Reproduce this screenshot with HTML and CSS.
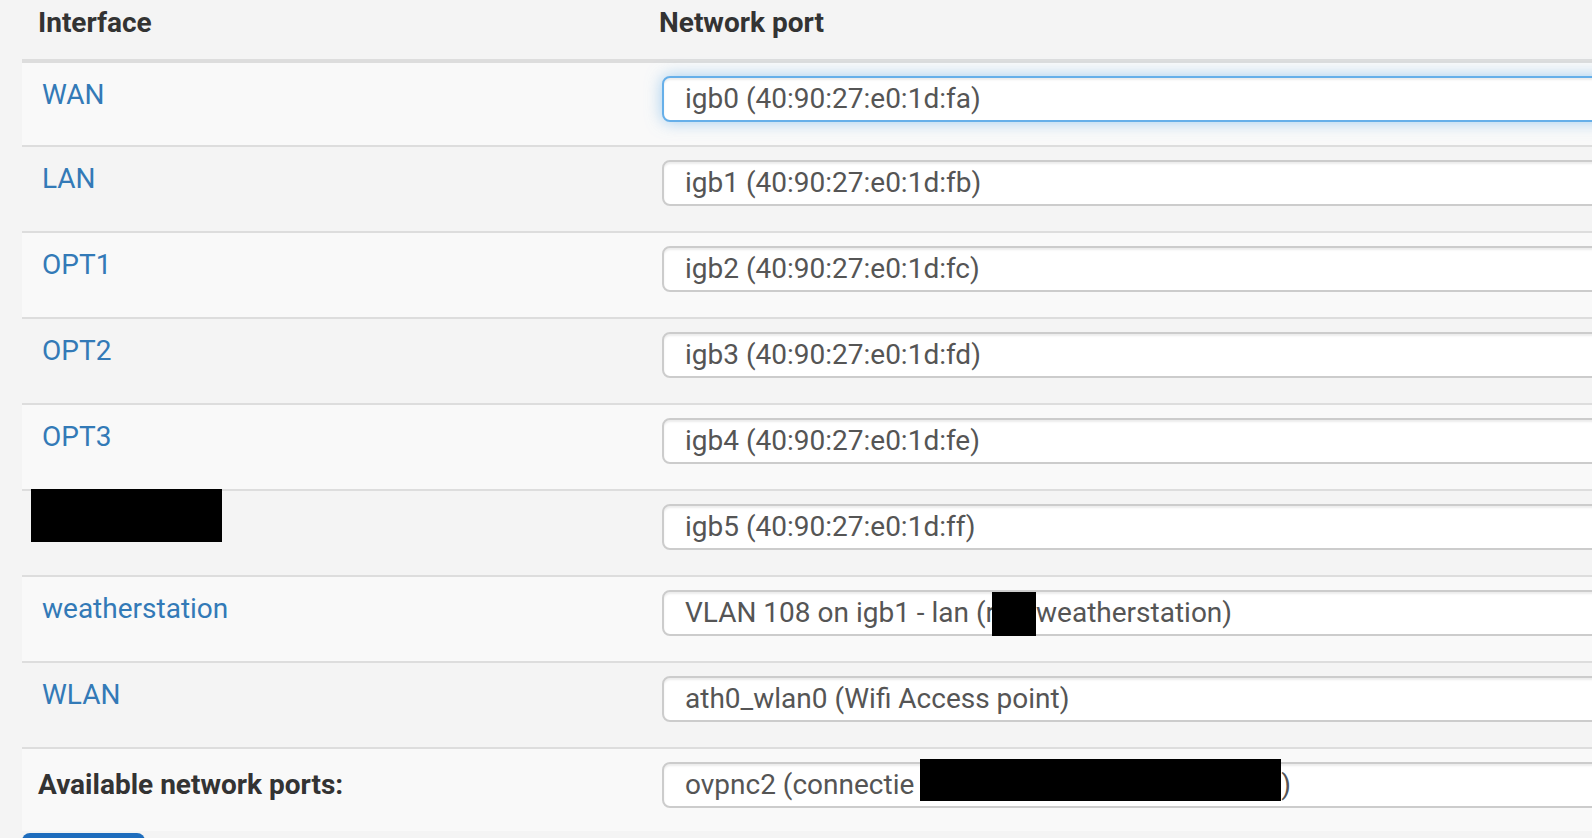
FILE: index.html
```html
<!DOCTYPE html>
<html lang="en">
<head>
    <meta charset="UTF-8">
    <title>Interfaces: Interface Assignments</title>
    <link rel="stylesheet" href="styles.css">
</head>
<body>
    <div class="content">
        <table class="assign-table">
            <thead>
                <tr>
                    <th class="col-if">Interface</th>
                    <th class="col-port">Network port</th>
                </tr>
            </thead>
            <tbody>
                <tr>
                    <td class="if-name"><a href="#">WAN</a></td>
                    <td><div class="port-select focused">igb0 (40:90:27:e0:1d:fa)</div></td>
                </tr>
                <tr>
                    <td class="if-name"><a href="#">LAN</a></td>
                    <td><div class="port-select">igb1 (40:90:27:e0:1d:fb)</div></td>
                </tr>
                <tr>
                    <td class="if-name"><a href="#">OPT1</a></td>
                    <td><div class="port-select">igb2 (40:90:27:e0:1d:fc)</div></td>
                </tr>
                <tr>
                    <td class="if-name"><a href="#">OPT2</a></td>
                    <td><div class="port-select">igb3 (40:90:27:e0:1d:fd)</div></td>
                </tr>
                <tr>
                    <td class="if-name"><a href="#">OPT3</a></td>
                    <td><div class="port-select">igb4 (40:90:27:e0:1d:fe)</div></td>
                </tr>
                <tr>
                    <td class="if-name"><div class="redact redact-name"></div></td>
                    <td><div class="port-select">igb5 (40:90:27:e0:1d:ff)</div></td>
                </tr>
                <tr>
                    <td class="if-name"><a href="#">weatherstation</a></td>
                    <td><div class="port-select">VLAN 108 on igb1 - lan (r<span class="redact redact-vlan"></span>weatherstation)</div></td>
                </tr>
                <tr>
                    <td class="if-name"><a href="#">WLAN</a></td>
                    <td><div class="port-select">ath0_wlan0 (Wifi Access point)</div></td>
                </tr>
                <tr class="avail-row">
                    <th>Available network ports:</th>
                    <td><div class="port-select">ovpnc2 (connectie <span class="redact redact-vpn"></span>)</div></td>
                </tr>
            </tbody>
        </table>
        <button class="save-button" aria-label="Save"></button>
    </div>
</body>
</html>
```

FILE: styles.css
```css
html, body {
    margin: 0;
    padding: 0;
    overflow: hidden;
}
body {
    font-family: Roboto, "Liberation Sans", Arial, sans-serif;
    font-size: 28px;
    line-height: 40px;
    background-color: #f4f4f4;
    color: #333;
}
.content {
    padding-left: 22px;
    width: 1800px;
}
.assign-table {
    border-collapse: separate;
    border-spacing: 0;
    table-layout: fixed;
    width: 1700px;
}
.assign-table th {
    text-align: left;
    font-weight: bold;
    padding: 3px 16px 16px;
    vertical-align: top;
}
.assign-table thead th {
    border-bottom: 4px solid #ddd;
}
.assign-table .col-if {
    width: 589px;
}
.assign-table .col-port {
    width: auto;
}
.assign-table td {
    padding: 13px 16px 25px 19px;
    border-top: 2px solid #ddd;
    vertical-align: top;
}
.assign-table tbody tr:first-child td {
    border-top: 0;
    padding-bottom: 23px;
}
.assign-table tbody tr:nth-child(odd) {
    background-color: #f9f9f9;
}
.assign-table td.if-name {
    padding: 12px 16px 0 20px;
    position: relative;
}
.if-name a {
    color: #337ab7;
    text-decoration: none;
}
.avail-row th {
    border-top: 2px solid #ddd;
    padding-top: 16px;
}
.avail-row td {
    padding-bottom: 23px;
}
.port-select {
    height: 42px;
    width: 1100px;
    line-height: 42px;
    padding-left: 21px;
    border: 2px solid #ccc;
    border-radius: 8px;
    background-color: #fff;
    color: #555;
    white-space: nowrap;
    box-shadow: inset 0 2px 2px rgba(0, 0, 0, 0.075);
}
.port-select.focused {
    border-color: #66afe9;
    box-shadow: inset 0 2px 2px rgba(0, 0, 0, 0.075), 0 0 16px rgba(102, 175, 233, 0.6);
}
.redact {
    background-color: #000;
}
.redact-name {
    position: absolute;
    top: -2px;
    left: 9px;
    width: 191px;
    height: 53px;
}
.redact-vlan {
    display: inline-block;
    width: 44px;
    height: 44px;
    vertical-align: top;
    margin-left: -3px;
}
.redact-vpn {
    display: inline-block;
    width: 361px;
    height: 42px;
    vertical-align: top;
    position: relative;
    top: -5px;
    margin-left: -1px;
}
.save-button {
    display: block;
    margin-top: 2px;
    width: 123px;
    height: 68px;
    border: none;
    border-radius: 8px;
    background-color: #1e6dbd;
}
```
